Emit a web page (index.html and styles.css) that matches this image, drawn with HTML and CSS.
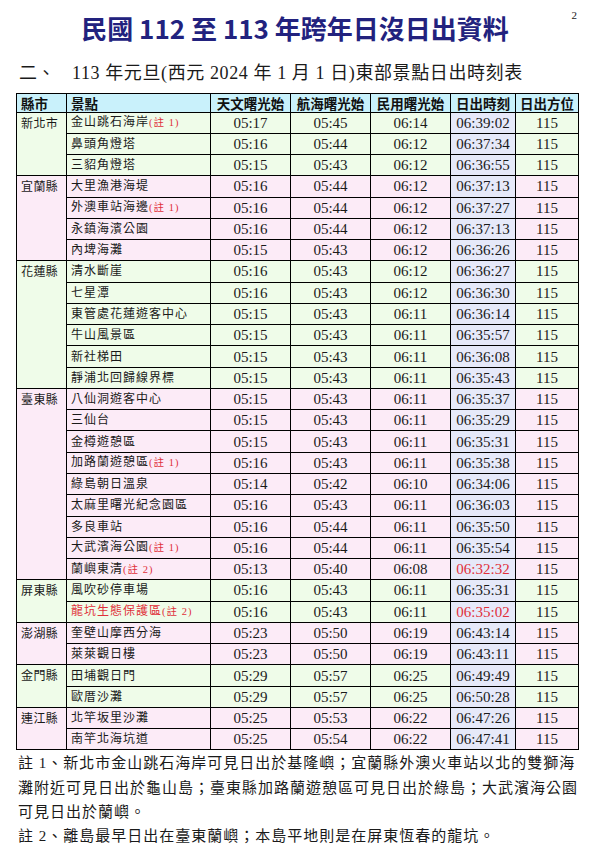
FILE: index.html
```html
<!DOCTYPE html>
<html lang="zh-Hant">
<head>
<meta charset="utf-8">
<title>民國 112 至 113 年跨年日沒日出資料</title>
<link rel="stylesheet" href="styles.css">
</head>
<body>
<div class="page">
  <header class="top">
    <span></span>
    <h1 class="title">民國 112 至 113 年跨年日沒日出資料</h1>
    <span class="pagenum">2</span>
  </header>
  <h2 class="subtitle"><span class="secno">二、</span>113 年元旦(西元 2024 年 1 月 1 日)東部景點日出時刻表</h2>
  <table class="sun">
    <colgroup>
      <col class="c-county"><col class="c-spot"><col class="c-t"><col class="c-t"><col class="c-t"><col class="c-rise"><col class="c-az">
    </colgroup>
    <thead>
      <tr><th class="l">縣市</th><th class="l">景點</th><th>天文曙光始</th><th>航海曙光始</th><th>民用曙光始</th><th>日出時刻</th><th>日出方位</th></tr>
    </thead>
    <tbody>
      <tr class="g"><td class="county" rowspan="3">新北市</td><td class="spot">金山跳石海岸<span class="note">(註 1)</span></td><td>05:17</td><td>05:45</td><td>06:14</td><td class="rise">06:39:02</td><td>115</td></tr>
      <tr class="g"><td class="spot">鼻頭角燈塔</td><td>05:16</td><td>05:44</td><td>06:12</td><td class="rise">06:37:34</td><td>115</td></tr>
      <tr class="g"><td class="spot">三貂角燈塔</td><td>05:15</td><td>05:43</td><td>06:12</td><td class="rise">06:36:55</td><td>115</td></tr>

      <tr class="p"><td class="county" rowspan="4">宜蘭縣</td><td class="spot">大里漁港海堤</td><td>05:16</td><td>05:44</td><td>06:12</td><td class="rise">06:37:13</td><td>115</td></tr>
      <tr class="p"><td class="spot">外澳車站海邊<span class="note">(註 1)</span></td><td>05:16</td><td>05:44</td><td>06:12</td><td class="rise">06:37:27</td><td>115</td></tr>
      <tr class="p"><td class="spot">永鎮海濱公園</td><td>05:16</td><td>05:44</td><td>06:12</td><td class="rise">06:37:13</td><td>115</td></tr>
      <tr class="p"><td class="spot">內埤海灘</td><td>05:15</td><td>05:43</td><td>06:12</td><td class="rise">06:36:26</td><td>115</td></tr>

      <tr class="g"><td class="county" rowspan="6">花蓮縣</td><td class="spot">清水斷崖</td><td>05:16</td><td>05:43</td><td>06:12</td><td class="rise">06:36:27</td><td>115</td></tr>
      <tr class="g"><td class="spot">七星潭</td><td>05:16</td><td>05:43</td><td>06:12</td><td class="rise">06:36:30</td><td>115</td></tr>
      <tr class="g"><td class="spot">東管處花蓮遊客中心</td><td>05:15</td><td>05:43</td><td>06:11</td><td class="rise">06:36:14</td><td>115</td></tr>
      <tr class="g"><td class="spot">牛山風景區</td><td>05:15</td><td>05:43</td><td>06:11</td><td class="rise">06:35:57</td><td>115</td></tr>
      <tr class="g"><td class="spot">新社梯田</td><td>05:15</td><td>05:43</td><td>06:11</td><td class="rise">06:36:08</td><td>115</td></tr>
      <tr class="g"><td class="spot">靜浦北回歸線界標</td><td>05:15</td><td>05:43</td><td>06:11</td><td class="rise">06:35:43</td><td>115</td></tr>

      <tr class="p"><td class="county" rowspan="9">臺東縣</td><td class="spot">八仙洞遊客中心</td><td>05:15</td><td>05:43</td><td>06:11</td><td class="rise">06:35:37</td><td>115</td></tr>
      <tr class="p"><td class="spot">三仙台</td><td>05:15</td><td>05:43</td><td>06:11</td><td class="rise">06:35:29</td><td>115</td></tr>
      <tr class="p"><td class="spot">金樽遊憩區</td><td>05:15</td><td>05:43</td><td>06:11</td><td class="rise">06:35:31</td><td>115</td></tr>
      <tr class="p"><td class="spot">加路蘭遊憩區<span class="note">(註 1)</span></td><td>05:16</td><td>05:43</td><td>06:11</td><td class="rise">06:35:38</td><td>115</td></tr>
      <tr class="p"><td class="spot">綠島朝日溫泉</td><td>05:14</td><td>05:42</td><td>06:10</td><td class="rise">06:34:06</td><td>115</td></tr>
      <tr class="p"><td class="spot">太麻里曙光紀念園區</td><td>05:16</td><td>05:43</td><td>06:11</td><td class="rise">06:36:03</td><td>115</td></tr>
      <tr class="p"><td class="spot">多良車站</td><td>05:16</td><td>05:44</td><td>06:11</td><td class="rise">06:35:50</td><td>115</td></tr>
      <tr class="p"><td class="spot">大武濱海公園<span class="note">(註 1)</span></td><td>05:16</td><td>05:44</td><td>06:11</td><td class="rise">06:35:54</td><td>115</td></tr>
      <tr class="p"><td class="spot">蘭嶼東清<span class="note">(註 2)</span></td><td>05:13</td><td>05:40</td><td>06:08</td><td class="rise red">06:32:32</td><td>115</td></tr>

      <tr class="g"><td class="county" rowspan="2">屏東縣</td><td class="spot">風吹砂停車場</td><td>05:16</td><td>05:43</td><td>06:11</td><td class="rise">06:35:31</td><td>115</td></tr>
      <tr class="g"><td class="spot red">龍坑生態保護區<span class="note">(註 2)</span></td><td>05:16</td><td>05:43</td><td>06:11</td><td class="rise red">06:35:02</td><td>115</td></tr>

      <tr class="p"><td class="county" rowspan="2">澎湖縣</td><td class="spot">奎壁山摩西分海</td><td>05:23</td><td>05:50</td><td>06:19</td><td class="rise">06:43:14</td><td>115</td></tr>
      <tr class="p"><td class="spot">萊萊觀日樓</td><td>05:23</td><td>05:50</td><td>06:19</td><td class="rise">06:43:11</td><td>115</td></tr>

      <tr class="g"><td class="county" rowspan="2">金門縣</td><td class="spot">田埔觀日門</td><td>05:29</td><td>05:57</td><td>06:25</td><td class="rise">06:49:49</td><td>115</td></tr>
      <tr class="g"><td class="spot">歐厝沙灘</td><td>05:29</td><td>05:57</td><td>06:25</td><td class="rise">06:50:28</td><td>115</td></tr>

      <tr class="p"><td class="county" rowspan="2">連江縣</td><td class="spot">北竿坂里沙灘</td><td>05:25</td><td>05:53</td><td>06:22</td><td class="rise">06:47:26</td><td>115</td></tr>
      <tr class="p"><td class="spot">南竿北海坑道</td><td>05:25</td><td>05:54</td><td>06:22</td><td class="rise">06:47:41</td><td>115</td></tr>
    </tbody>
  </table>
  <div class="notes">
    <p>註 1、新北市金山跳石海岸可見日出於基隆嶼；宜蘭縣外澳火車站以北的雙獅海<br>灘附近可見日出於龜山島；臺東縣加路蘭遊憩區可見日出於綠島；大武濱海公園<br>可見日出於蘭嶼。</p>
    <p>註 2、離島最早日出在臺東蘭嶼；本島平地則是在屏東恆春的龍坑。</p>
  </div>
</div>
</body>
</html>
```

FILE: styles.css
```css
* { box-sizing: border-box; }
html, body { margin: 0; padding: 0; background: #fff; }
body {
  font-family: "Liberation Serif", "Noto Sans CJK TC", serif;
  color: #1a1a1a;
}
.page {
  width: 590px;
  height: 846px;
  overflow: hidden;
}
.top {
  display: grid;
  grid-template-columns: 1fr auto 1fr;
  align-items: start;
  padding-top: 10px;
}
.title {
  margin: 0;
  font-family: "Noto Sans CJK TC", "Noto Sans", sans-serif;
  font-weight: 700;
  font-size: 26px;
  line-height: 36px;
  color: #22227e;
  white-space: nowrap;
}
.pagenum {
  justify-self: end;
  padding-right: 13px;
  font-size: 11px;
  line-height: 12px;
  margin-top: -1px;
}
.subtitle {
  margin: 15px 0 0 19px;
  font-family: "Liberation Serif", "Noto Sans CJK TC", serif;
  font-weight: 400;
  font-size: 18px;
  line-height: 24px;
  letter-spacing: 0.6px;
  white-space: nowrap;
}
.secno {
  display: inline-block;
  width: 53px;
  letter-spacing: 0;
}
.sun {
  margin: 8px 0 0 16px;
  width: 562px;
  border-collapse: collapse;
  table-layout: fixed;
  font-size: 15px;
}
.c-county { width: 50px; }
.c-spot { width: 144px; }
.c-t { width: 80px; }
.c-rise { width: 65px; }
.c-az { width: 63px; }
.sun th, .sun td {
  border: 1px solid #000;
  padding: 0 4px;
  text-align: center;
  line-height: 16px;
  white-space: nowrap;
  overflow: hidden;
}
.sun thead tr { height: 18.5px; background: #c9f1fb; }
.sun th {
  font-family: "Noto Sans CJK TC", "Noto Sans", sans-serif;
  font-weight: 700;
  font-size: 13.5px;
  color: #111;
}
.sun th.l { text-align: left; }
.sun tbody tr { height: 21.27px; }
.sun tr.g { background: #effce9; }
.sun tr.p { background: #fcebf7; }
.sun td.county, .sun td.spot {
  text-align: left;
  font-size: 12px;
  letter-spacing: 1px;
}
.sun td.county { vertical-align: top; padding-top: 3px; letter-spacing: 0.4px; }
.sun td.rise { background: #e6e9f9; }
.note {
  color: #e0303a;
  font-size: 10.5px;
  letter-spacing: 1px;
}
.red { color: #e0303a; }
.notes {
  margin: 1px 0 0 18px;
  font-family: "Liberation Serif", "Noto Sans CJK TC", serif;
  font-size: 15px;
  line-height: 24.3px;
  letter-spacing: 1px;
  white-space: nowrap;
}
.notes p { margin: 0; }
```
